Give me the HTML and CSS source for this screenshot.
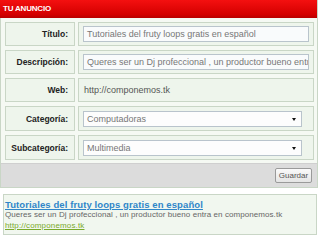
FILE: index.html
```html
<!DOCTYPE html>
<html lang="es">
<head>
  <meta charset="UTF-8" />
  <title>Tu anuncio</title>
  <link rel="stylesheet" href="styles.css">
</head>
<body>
  <!-- Formulario del anuncio -->
  <div class="panel">
    <div class="panel-head">TU ANUNCIO</div>
    <div class="form-grid">
      <div class="cell label">Título:</div>
      <div class="cell value"><div class="field">Tutoriales del fruty loops gratis en español</div></div>

      <div class="cell label">Descripción:</div>
      <div class="cell value"><div class="field">Queres ser un Dj profeccional , un productor bueno entra en componemos.tk</div></div>

      <div class="cell label">Web:</div>
      <div class="cell value"><span class="plain">http://componemos.tk</span></div>

      <div class="cell label tall">Categoría:</div>
      <div class="cell value tall"><div class="field select">Computadoras<span class="arrow"></span></div></div>

      <div class="cell label tall">Subcategoría:</div>
      <div class="cell value tall"><div class="field select">Multimedia<span class="arrow"></span></div></div>
    </div>
    <div class="actions">
      <button class="save-btn">Guardar</button>
    </div>
  </div>

  <!-- Vista previa -->
  <div class="preview">
    <a href="#" class="preview-title">Tutoriales del fruty loops gratis en español</a>
    <p class="preview-desc">Queres ser un Dj profeccional , un productor bueno entra en componemos.tk</p>
    <a href="#" class="preview-url">http://componemos.tk</a>
  </div>
</body>
</html>
```

FILE: styles.css
```css
* {
  margin: 0;
  padding: 0;
  box-sizing: border-box;
}

body {
  font-family: "Liberation Sans", Arial, sans-serif;
  font-size: 8px;
  color: #666;
  background-color: #fff;
  width: 320px;
}

/* Panel */
.panel {
  width: 318px;
  background-color: #f5f9f3;
  border: 1px solid #c9d6c6;
  border-top: none;
}

.panel-head {
  height: 18px;
  line-height: 17px;
  padding-left: 3px;
  background: linear-gradient(#f41010, #d40000 80%, #b80000);
  color: #fff;
  font-weight: bold;
  font-size: 8px;
  letter-spacing: -0.2px;
  margin: 0 -1px 0 -1px;
  width: 317px;
}

.form-grid {
  display: grid;
  grid-template-columns: 70px 236px;
  column-gap: 3px;
  row-gap: 4px;
  padding: 4px 0 3px 4px;
}

.cell {
  height: 24px;
  background-color: #eef5ec;
  border: 1px solid #c9d6c6;
  display: flex;
  align-items: center;
}

.cell.tall {
  height: 25px;
}

.label {
  justify-content: flex-end;
  padding-right: 6px;
  font-weight: bold;
  font-size: 8.5px;
  color: #222;
}

.value {
  padding-left: 4px;
}

.field {
  width: 226px;
  height: 16px;
  line-height: 14px;
  padding-left: 3px;
  background-color: #f9fbfc;
  border: 1px solid #b9c4cc;
  color: #777;
  white-space: nowrap;
  overflow: hidden;
  font-size: 9px;
}

.field.select {
  width: 219px;
  position: relative;
  background-color: #fdfdfd;
}

.arrow {
  position: absolute;
  right: 5px;
  top: 6px;
  border-left: 2.5px solid transparent;
  border-right: 2.5px solid transparent;
  border-top: 3px solid #111;
}

.plain {
  color: #555;
  font-size: 9px;
  padding-left: 1px;
}

/* Botonera */
.actions {
  height: 24px;
  background-color: #dcdcdc;
  border-top: 1px solid #cfcfcf;
  display: flex;
  justify-content: flex-end;
  align-items: center;
  padding-right: 5px;
}

.save-btn {
  height: 15px;
  width: 37px;
  font-family: "Liberation Sans", Arial, sans-serif;
  font-size: 8px;
  color: #555;
  background: linear-gradient(#fafafa, #e4e4e4);
  border: 1px solid #9a9a9a;
  border-radius: 2px;
}

/* Vista previa */
.preview {
  margin: 6px 0 0 3px;
  width: 314px;
  height: 41px;
  padding: 4px 0 0 1px;
  background-color: #f1f7ef;
  border: 1px solid #c9d6c6;
}

.preview-title {
  display: block;
  font-size: 9.5px;
  font-weight: bold;
  color: #2f86c9;
  line-height: 11px;
  letter-spacing: 0.1px;
}

.preview-desc {
  line-height: 10px;
  color: #666;
  letter-spacing: 0.07px;
}

.preview-url {
  display: block;
  color: #7aaa2a;
  line-height: 11px;
  letter-spacing: 0.15px;
}
```
